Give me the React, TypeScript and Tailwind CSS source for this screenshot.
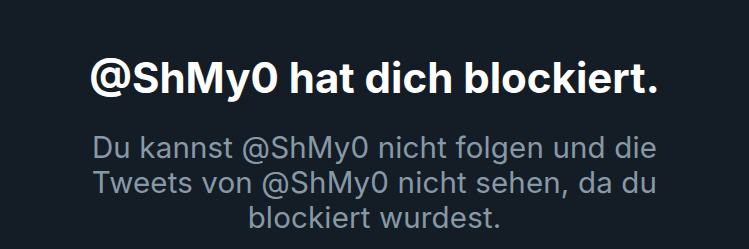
export default function App() {
  return (
    <div className="w-[749px] h-[249px] bg-[#141d26] flex flex-col items-center pt-[53px] font-['Inter',sans-serif] text-center">
      <h1 className="text-[42px] leading-[50px] font-bold text-white">
        @ShMy0 hat dich blockiert.
      </h1>
      <p className="mt-[27px] w-[600px] text-[29.5px] leading-[35px] tracking-[0.15px] text-[#8899a6]">
        Du kannst @ShMy0 nicht folgen und die Tweets von @ShMy0 nicht sehen, da du blockiert wurdest.
      </p>
    </div>
  );
}
